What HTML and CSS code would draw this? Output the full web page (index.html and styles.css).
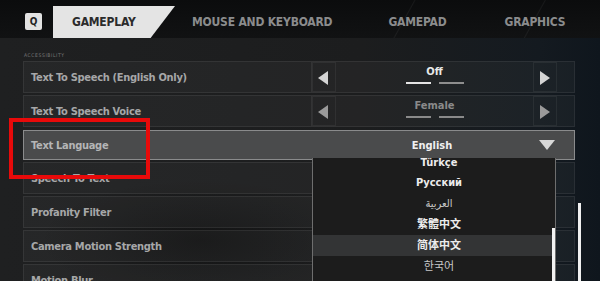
FILE: index.html
```html
<!DOCTYPE html>
<html lang="en">
<head>
    <meta charset="UTF-8">
    <meta name="viewport" content="width=device-width, initial-scale=1.0">
    <title>Settings</title>
    <link rel="stylesheet" href="styles.css">
</head>
<body>
    <div id="screen">
        <div class="topbar">
            <span class="key">Q</span>
            <div class="tab active">GAMEPLAY</div>
            <div class="tab">MOUSE AND KEYBOARD</div>
            <div class="tab">GAMEPAD</div>
            <div class="tab">GRAPHICS</div>
        </div>
        <div class="section">ACCESSIBILITY</div>
        <div class="list">
            <div class="row">
                <span class="label">Text To Speech (English Only)</span>
                <div class="control">
                    <span class="arrow left"></span>
                    <div class="value">
                        <span>Off</span>
                        <div class="bars"><i class="on"></i><i></i></div>
                    </div>
                    <span class="arrow right"></span>
                </div>
            </div>
            <div class="row dim">
                <span class="label">Text To Speech Voice</span>
                <div class="control">
                    <span class="arrow left"></span>
                    <div class="value">
                        <span>Female</span>
                        <div class="bars"><i></i><i></i></div>
                    </div>
                    <span class="arrow right"></span>
                </div>
            </div>
            <div class="row selected">
                <span class="label">Text Language</span>
                <div class="picked">English</div>
                <span class="caret"></span>
            </div>
            <div class="row"><span class="label">Speech To Text</span></div>
            <div class="row"><span class="label">Profanity Filter</span></div>
            <div class="row"><span class="label">Camera Motion Strength</span></div>
            <div class="row"><span class="label">Motion Blur</span></div>
        </div>

        <div class="dropdown">
            <div class="item">Türkçe</div>
            <div class="item">Русский</div>
            <div class="item soft">العربية</div>
            <div class="item">繁體中文</div>
            <div class="item hover">简体中文</div>
            <div class="item soft">한국어</div>
            <div class="thumb"></div>
        </div>
        <div class="page-scroll"></div>
        <div class="highlight"></div>
    </div>
</body>
</html>
```

FILE: styles.css
```css
body {
    margin: 0;
    background: #0c0d0e;
    font-family: "DejaVu Sans Condensed", "DejaVu Sans", "Noto Sans CJK SC", "Noto Sans CJK KR", sans-serif;
}

#screen {
    position: relative;
    width: 600px;
    height: 281px;
    overflow: hidden;
    background:
        radial-gradient(ellipse 160px 60px at 200px 240px, rgba(10, 10, 10, 0.55), transparent),
        linear-gradient(90deg, #1f2021 0%, #1c1d1e 60%, #141a20 90%, #0f161d 100%);
}

.topbar {
    height: 38px;
    display: flex;
    align-items: flex-end;
    background:
        linear-gradient(119deg, transparent 362px, rgba(255, 255, 255, 0.05) 363px, transparent 364px),
        linear-gradient(119deg, transparent 476px, rgba(255, 255, 255, 0.05) 477px, transparent 478px),
        linear-gradient(180deg, #0b0c0d, #111213);
}

.key {
    width: 17px;
    height: 17px;
    margin: 0 11px 8px 25px;
    border-radius: 2px;
    background: #e2e2e2;
    color: #222;
    font-size: 10px;
    font-weight: bold;
    line-height: 17px;
    text-align: center;
}

.tab {
    height: 32px;
    line-height: 32px;
    font-size: 12px;
    font-weight: bold;
    color: #8b8c8d;
    letter-spacing: -0.2px;
    white-space: nowrap;
}

.tab.active {
    width: 122px;
    padding-left: 19px;
    box-sizing: border-box;
    margin-right: 17px;
    background: #e4e4e4;
    color: #2b2b2b;
    clip-path: polygon(0 0, 100% 0, 80% 100%, 0 100%);
}

.tab:nth-child(3) { margin-right: 56px; }
.tab:nth-child(4) { margin-right: 58px; }

.section {
    height: 22px;
    padding-left: 24px;
    font-size: 5px;
    line-height: 34px;
    color: #777;
    letter-spacing: 0.6px;
}

.list {
    padding: 1px 25px 0 23px;
    display: flex;
    flex-direction: column;
    gap: 2px;
}

.row {
    height: 32px;
    display: flex;
    align-items: center;
    box-sizing: border-box;
    border: 1px solid rgba(255, 255, 255, 0.07);
    background: rgba(255, 255, 255, 0.035);
}

.label {
    width: 280px;
    padding-left: 7px;
    font-size: 11px;
    font-weight: bold;
    letter-spacing: -0.3px;
    color: #a6a7a8;
}

.control {
    flex: 1;
    height: 100%;
    display: flex;
    border-left: 1px solid rgba(255, 255, 255, 0.07);
}

.arrow {
    width: 22px;
    border: 1px solid rgba(255, 255, 255, 0.06);
    position: relative;
}

.arrow::after {
    content: "";
    position: absolute;
    top: 8px;
    left: 5px;
    border-top: 7px solid transparent;
    border-bottom: 7px solid transparent;
}

.arrow.left::after { border-right: 10px solid #d4d4d4; }
.arrow.right::after { border-left: 10px solid #d4d4d4; left: 6px; }
.arrow.right { margin-right: 17px; }

.value {
    flex: 1;
    display: flex;
    flex-direction: column;
    align-items: center;
    padding-top: 3px;
    font-size: 11px;
    font-weight: bold;
    color: #e8e8e8;
}

.bars {
    display: flex;
    gap: 8px;
    margin-top: 4px;
}

.bars i {
    width: 25px;
    height: 2px;
    background: #8e8e8e;
}

.bars i.on { background: #e4e4e4; }

.dim .value { color: #8a8a8a; }
.dim .bars i { background: #8a8a8a; }
.dim .arrow::after { border-left-color: #9a9a9a; border-right-color: #9a9a9a; }

.row.selected {
    height: 30px;
    margin-top: 1px;
    border: 1px solid #8a8b8c;
    background: #4a4b4c;
}

.selected .label { color: #b4b5b6; }

.picked {
    flex: 1;
    text-align: center;
    padding-left: 40px;
    font-size: 11px;
    font-weight: bold;
    color: #f0f0f0;
}

.caret {
    margin: 0 19px 0 26px;
    border-left: 8px solid transparent;
    border-right: 8px solid transparent;
    border-top: 10px solid #d8d8d8;
}

.dropdown {
    position: absolute;
    left: 312px;
    top: 158px;
    width: 244px;
    height: 130px;
    box-sizing: border-box;
    background: #1c1c1c;
    border: 1px solid #6e6e6e;
    border-top: none;
}

.item {
    height: 21px;
    line-height: 21px;
    text-align: center;
    padding-left: 10px;
    font-size: 11px;
    font-weight: bold;
    color: #ececec;
}

.item:first-child { height: 14px; line-height: 10px; }
.item.soft { color: #c8c8c8; font-weight: normal; }
.item.hover { background: #333435; }

.thumb {
    position: absolute;
    right: 0;
    top: 70px;
    width: 3px;
    height: 60px;
    background: #f2f2f2;
}

.page-scroll {
    position: absolute;
    left: 578px;
    top: 203px;
    width: 3px;
    height: 80px;
    background: #f0f0f0;
}

.highlight {
    position: absolute;
    left: 9px;
    top: 118px;
    width: 133px;
    height: 53px;
    border: 4px solid #e80a0a;
}
```
